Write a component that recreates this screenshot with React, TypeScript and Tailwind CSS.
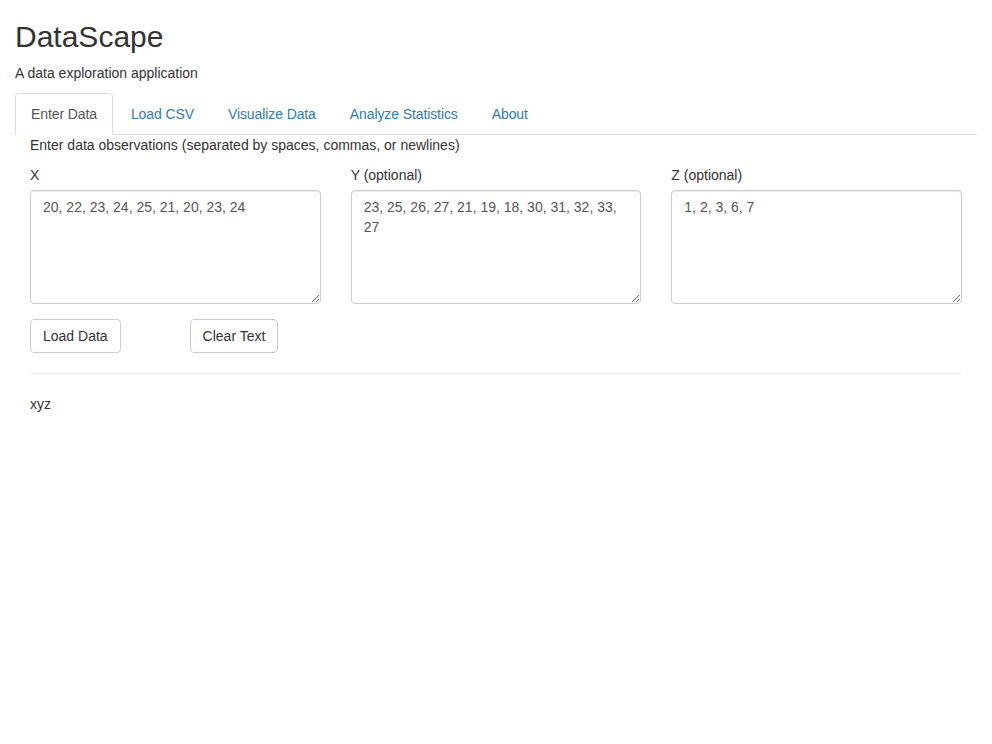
import React, { useState } from "react";

const tabs = ["Enter Data", "Load CSV", "Visualize Data", "Analyze Statistics", "About"];

const fields = [
  { id: "x", label: "X", value: "20, 22, 23, 24, 25, 21, 20, 23, 24" },
  { id: "y", label: "Y (optional)", value: "23, 25, 26, 27, 21, 19, 18, 30, 31, 32, 33, 27" },
  { id: "z", label: "Z (optional)", value: "1, 2, 3, 6, 7" },
];

export default function App() {
  const [active, setActive] = useState("Enter Data");
  const [values, setValues] = useState(fields.map((f) => f.value));

  return (
    <div
      className="min-h-[744px] bg-white px-[15px] text-[14px] leading-[20px] text-[#333]"
      style={{ fontFamily: '"Liberation Sans", Arial, sans-serif' }}
    >
      <h2 className="mt-[20px] mb-[10px] text-[30px] leading-[33px] font-normal">DataScape</h2>
      <p className="mb-[10px]">A data exploration application</p>

      {/* tabs */}
      <ul className="flex border-b border-[#ddd]">
        {tabs.map((t) => (
          <li key={t} className="-mb-px mr-[2px]">
            <button
              onClick={() => setActive(t)}
              className={
                active === t
                  ? "block rounded-t-[4px] border border-[#ddd] border-b-transparent bg-white px-[15px] py-[10px] tracking-[-0.1px] text-[#555]"
                  : "block rounded-t-[4px] border border-transparent px-[15px] py-[10px] tracking-[-0.1px] text-[#337ab7] hover:bg-[#eee]"
              }
            >
              {t}
            </button>
          </li>
        ))}
      </ul>

      <div className="px-[15px]">
        <p>Enter data observations (separated by spaces, commas, or newlines)</p>

        <div className="-mx-[15px] mt-[10px] grid grid-cols-3">
          {fields.map((f, i) => (
            <div key={f.id} className="px-[15px]">
              <label className="mb-[5px] block">{f.label}</label>
              <textarea
                rows={5}
                value={values[i]}
                onChange={(e) => {
                  const next = [...values];
                  next[i] = e.target.value;
                  setValues(next);
                }}
                className="block h-[114px] w-full rounded-[4px] border border-[#ccc] px-[12px] py-[6px] text-[14px] leading-[20px] text-[#555] shadow-[inset_0_1px_1px_rgba(0,0,0,0.075)] outline-none"
              />
            </div>
          ))}
        </div>

        <div className="mt-[15px] flex">
          <button className="h-[34px] rounded-[4px] border border-[#ccc] bg-white px-[12px] text-[#333]">
            Load Data
          </button>
          <button className="ml-[69px] h-[34px] rounded-[4px] border border-[#ccc] bg-white px-[12px] text-[#333]">
            Clear Text
          </button>
        </div>

        <hr className="mt-[20px] mb-[20px] border-t border-[#eee]" />

        <p>xyz</p>
      </div>
    </div>
  );
}
